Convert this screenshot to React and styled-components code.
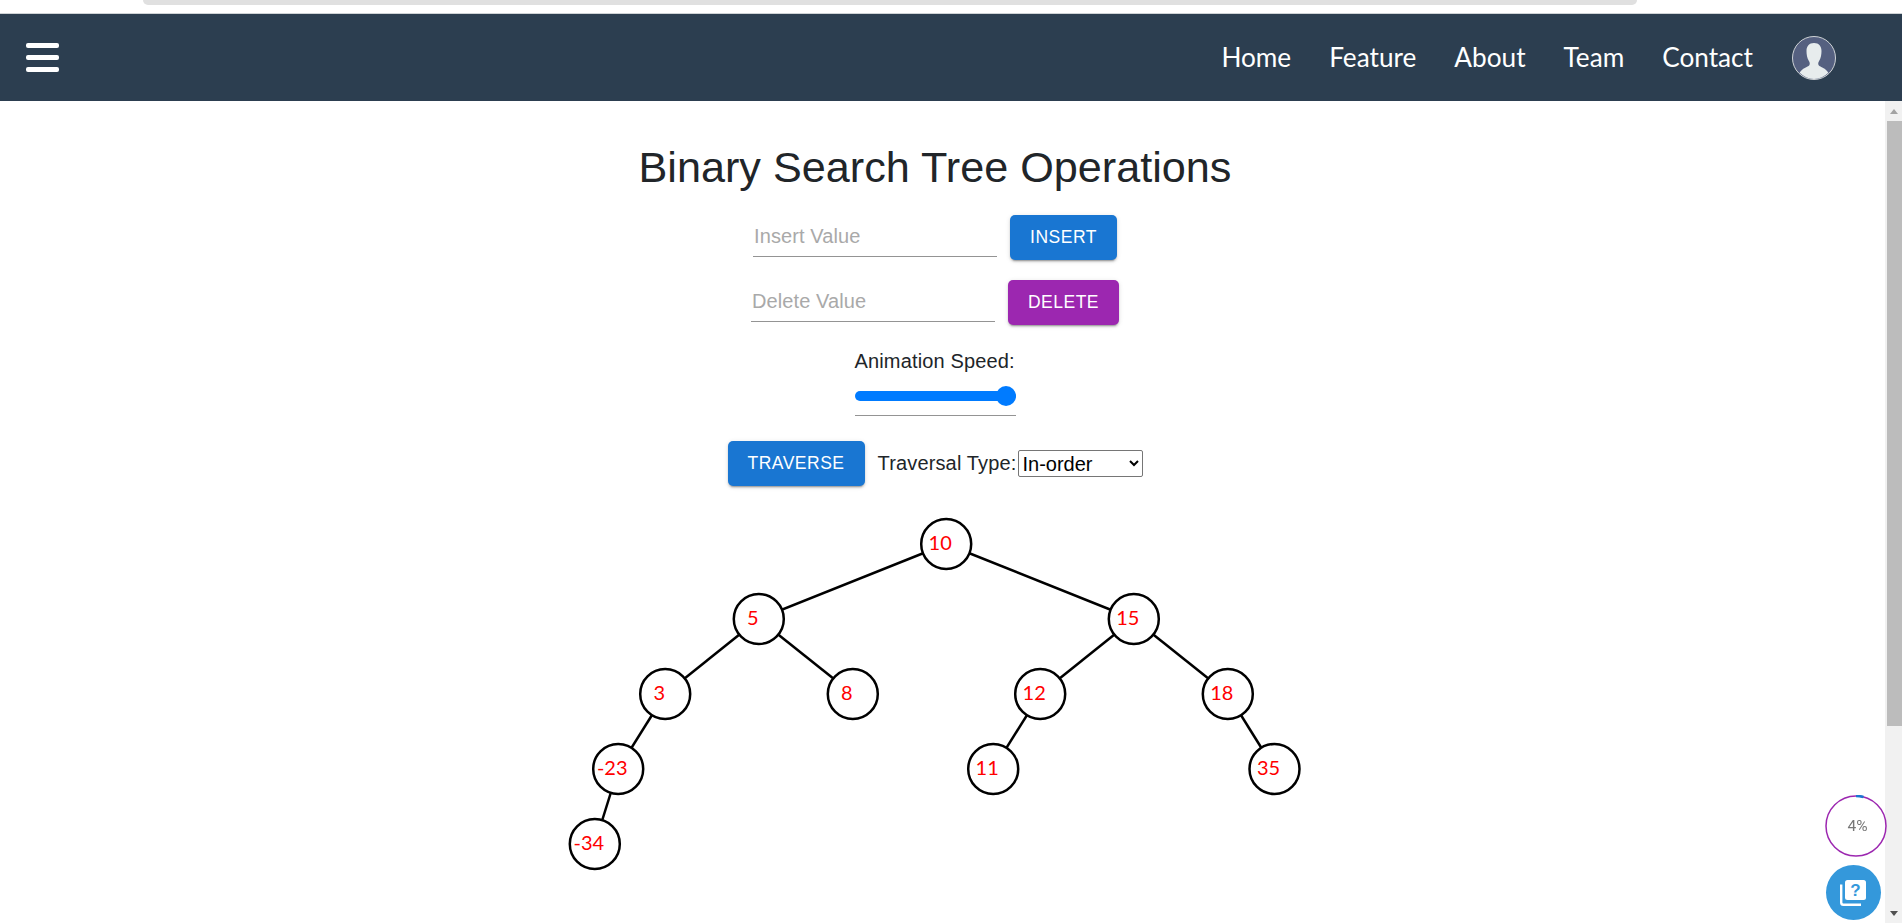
import styled, { createGlobalStyle } from "styled-components";

const GlobalStyle = createGlobalStyle`
  html, body {
    margin: 0;
    padding: 0;
    background: #fff;
    overflow: hidden;
  }
  * {
    box-sizing: border-box;
  }
`;

const Page = styled.div`
  width: 1902px;
  height: 923px;
  overflow: hidden;
  display: flex;
  flex-direction: column;
  font-family: "Liberation Sans", Arial, sans-serif;
  color: #212529;
`;
const TopStrip = styled.div`
  height: 13px;
  padding: 0 265px 0 143px;
`;
const TabEdge = styled.div`
  height: 5px;
  background: #e0e0e0;
  border-radius: 0 0 10px 10px;
`;
const Navbar = styled.nav`
  height: 88px;
  background: #2c3e50;
  border-top: 1px solid #cfd3d6;
  display: flex;
  align-items: center;
  justify-content: space-between;
  padding: 0 66px 0 26px;
`;
const Burger = styled.div`
  width: 33px;
  display: flex;
  flex-direction: column;
  gap: 7px;
`;
const BurgerBar = styled.span`
  display: block;
  height: 5px;
  background: #fff;
  border-radius: 2px;
`;
const NavLinks = styled.div`
  display: flex;
  align-items: center;
  gap: 38px;
`;
const NavLink = styled.a`
  font-family: Lato, sans-serif;
  font-size: 26.2px;
  line-height: 32px;
  margin-top: -2px;
  color: #fff;
`;
const Avatar = styled.svg`
  width: 44px;
  height: 44px;
  margin-left: 1px;
  display: block;
`;
const Body = styled.div`
  flex: 1;
  display: flex;
  min-height: 0;
`;
const Main = styled.main`
  flex: 1;
  display: flex;
  flex-direction: column;
  align-items: center;
  padding: 42px 15px 0 0;
`;
const Title = styled.h1`
  margin: 0 0 24px;
  font-size: 43.2px;
  line-height: 48px;
  font-weight: 400;
  white-space: nowrap;
`;
const FormRow = styled.div`
  display: flex;
  align-items: flex-end;
  gap: 13px;
  margin-bottom: 20px;
`;
const TextInput = styled.input`
  width: 244px;
  height: 38px;
  margin-bottom: 3px;
  padding: 0 1px 2px;
  border: 0;
  border-bottom: 1px solid #949494;
  outline: none;
  font-family: "Liberation Sans", Arial, sans-serif;
  font-size: 20px;
  letter-spacing: 0.1px;
  background: transparent;
  &::placeholder {
    color: #a9a9a9;
    opacity: 1;
  }
`;
const ActionButton = styled.button`
  height: 45px;
  padding: 0 20px;
  border: 0;
  border-radius: 5px;
  background: ${(p) => p.$color};
  color: #fff;
  font-family: "Liberation Sans", Arial, sans-serif;
  font-size: 17.5px;
  letter-spacing: 0.5px;
  text-transform: uppercase;
  box-shadow: 0 3px 1px -2px rgba(0, 0, 0, 0.2), 0 2px 2px 0 rgba(0, 0, 0, 0.14),
    0 1px 5px 0 rgba(0, 0, 0, 0.12);
`;
const SpeedBlock = styled.div`
  width: 161px;
  margin-top: 4px;
  display: flex;
  flex-direction: column;
  border-bottom: 1px solid #949494;
  margin-bottom: 25px;
`;
const SpeedLabel = styled.label`
  font-size: 20px;
  line-height: 24px;
  letter-spacing: 0.15px;
  white-space: nowrap;
`;
const SpeedRange = styled.input`
  -webkit-appearance: none;
  appearance: none;
  width: 100%;
  height: 20px;
  margin: 13px 0 9px;
  background: transparent;
  &::-webkit-slider-runnable-track {
    height: 10px;
    border-radius: 5px;
    background: #007bff;
  }
  &::-webkit-slider-thumb {
    -webkit-appearance: none;
    width: 20px;
    height: 20px;
    margin-top: -5px;
    border-radius: 50%;
    background: #007bff;
  }
`;
const TraverseRow = styled.div`
  display: flex;
  align-items: center;
  gap: 13px;
  margin-bottom: 33px;
`;
const TypeLabel = styled.label`
  display: flex;
  align-items: center;
  gap: 1px;
  font-size: 20px;
  letter-spacing: 0.15px;
  white-space: nowrap;
`;
const TypeSelect = styled.select`
  width: 125px;
  height: 27px;
  font-family: "Liberation Sans", Arial, sans-serif;
  font-size: 20px;
  background: #fff;
  color: #000;
  border: 1px solid #767676;
  border-radius: 2px;
`;
const TreeSvg = styled.svg`
  display: block;
  width: 800px;
  height: 400px;
  flex-shrink: 0;
  overflow: visible;
`;
const Edge = styled.line`
  stroke: #000;
  stroke-width: 2.5;
`;
const NodeCircle = styled.circle`
  fill: #fff;
  stroke: #000;
  stroke-width: 2.5;
`;
const NodeLabel = styled.text`
  fill: #f00;
  font-family: Lato, sans-serif;
  font-size: 20px;
  text-anchor: middle;
`;
const Scrollbar = styled.div`
  width: 17px;
  background: #f1f1f1;
  display: flex;
  flex-direction: column;
  justify-content: space-between;
  align-items: flex-end;
`;
const ScrollArrow = styled.div`
  width: 17px;
  height: 20px;
  display: flex;
  align-items: center;
  justify-content: center;
  &::before {
    content: "";
    border-left: 4.5px solid transparent;
    border-right: 4.5px solid transparent;
    ${(p) => (p.$down ? "border-top: 5px solid #505050;" : "border-bottom: 5px solid #a3a3a3;")}
  }
`;
const ScrollThumb = styled.div`
  width: 15px;
  height: 605px;
  background: #bcbcbc;
`;
const ScrollGroup = styled.div`
  display: flex;
  flex-direction: column;
  align-items: flex-end;
`;
const Widgets = styled.div`
  position: fixed;
  right: 15px;
  bottom: 3px;
  display: flex;
  flex-direction: column;
  align-items: center;
  gap: 8px;
`;
const Progress = styled.div`
  width: 62px;
  height: 62px;
  display: grid;
  place-items: center;
  position: relative;
  font-family: Roboto, sans-serif;
  font-size: 15.5px;
  color: #777;
  svg {
    position: absolute;
    inset: 0;
  }
  span {
    position: relative;
    margin-left: 3px;
  }
`;
const Fab = styled.div`
  width: 55px;
  height: 55px;
  margin-right: 6px;
  border-radius: 50%;
  background: #3498db;
  display: grid;
  place-items: center;
`;

const nodes = [
  { id: 10, x: 411.2, y: 25 },
  { id: 5, x: 223.8, y: 100, parent: 10 },
  { id: 15, x: 598.8, y: 100, parent: 10 },
  { id: 3, x: 130.2, y: 175, parent: 5 },
  { id: 8, x: 317.8, y: 175, parent: 5 },
  { id: 12, x: 505.2, y: 175, parent: 15 },
  { id: 18, x: 692.8, y: 175, parent: 15 },
  { id: -23, x: 83.2, y: 250, parent: 3 },
  { id: 11, x: 458.2, y: 250, parent: 12 },
  { id: 35, x: 739.5, y: 250, parent: 18 },
  { id: -34, x: 59.8, y: 325, parent: -23 },
];

const Tree = () => (
  <TreeSvg viewBox="0 0 800 400">
    {nodes
      .filter((n) => n.parent !== undefined)
      .map((n) => {
        const p = nodes.find((o) => o.id === n.parent);
        return <Edge key={n.id} x1={p.x} y1={p.y} x2={n.x} y2={n.y} />;
      })}
    {nodes.map((n) => (
      <g key={n.id}>
        <NodeCircle cx={n.x} cy={n.y} r="25" />
        <NodeLabel x={n.x - 6} y={n.y + 6}>
          {n.id}
        </NodeLabel>
      </g>
    ))}
  </TreeSvg>
);

const App = () => {
  return (
    <Page>
      <GlobalStyle />
      <TopStrip>
        <TabEdge />
      </TopStrip>
      <Navbar>
        <Burger>
          <BurgerBar />
          <BurgerBar />
          <BurgerBar />
        </Burger>
        <NavLinks>
          <NavLink>Home</NavLink>
          <NavLink>Feature</NavLink>
          <NavLink>About</NavLink>
          <NavLink>Team</NavLink>
          <NavLink>Contact</NavLink>
          <Avatar viewBox="0 0 44 44">
            <circle cx="22" cy="22" r="21.5" fill="#556080" stroke="#cfd3d6" strokeWidth="1" />
            <path
              d="M22 7c-5 0-7.5 3.4-7.5 8 0 3.4.6 7.2 2.4 10 .9 1.4 1.2 3 .4 4.3-1.4 1.8-7.4 3-9.6 7.4A21 21 0 0 0 22 43a21 21 0 0 0 14.3-6.3c-2.2-4.4-8.2-5.6-9.6-7.4-.8-1.3-.5-2.9.4-4.3 1.8-2.8 2.4-6.6 2.4-10 0-4.6-2.5-8-7.5-8z"
              fill="#e7eced"
            />
          </Avatar>
        </NavLinks>
      </Navbar>
      <Body>
        <Main>
          <Title>Binary Search Tree Operations</Title>
          <FormRow>
            <TextInput placeholder="Insert Value" />
            <ActionButton $color="#1976d2">Insert</ActionButton>
          </FormRow>
          <FormRow>
            <TextInput placeholder="Delete Value" />
            <ActionButton $color="#9c27b0">Delete</ActionButton>
          </FormRow>
          <SpeedBlock>
            <SpeedLabel>Animation Speed:</SpeedLabel>
            <SpeedRange type="range" min="0" max="100" defaultValue="100" />
          </SpeedBlock>
          <TraverseRow>
            <ActionButton $color="#1976d2">Traverse</ActionButton>
            <TypeLabel>
              Traversal Type:
              <TypeSelect defaultValue="in">
                <option value="in">In-order</option>
                <option value="pre">Pre-order</option>
                <option value="post">Post-order</option>
              </TypeSelect>
            </TypeLabel>
          </TraverseRow>
          <Tree />
        </Main>
        <Scrollbar>
          <ScrollGroup>
            <ScrollArrow />
            <ScrollThumb />
          </ScrollGroup>
          <ScrollArrow $down />
        </Scrollbar>
      </Body>
      <Widgets>
        <Progress>
          <svg width="62" height="62" viewBox="0 0 62 62">
            <circle cx="31" cy="31" r="30" fill="#fff" stroke="#9c27b0" strokeWidth="1.5" />
            <path d="M31 1a30 30 0 0 1 7.5.95" fill="none" stroke="#1976d2" strokeWidth="2.5" />
          </svg>
          <span>4%</span>
        </Progress>
        <Fab>
          <svg width="26" height="26" viewBox="0 0 26 26">
            <path d="M1.2 4.5v18a2.3 2.3 0 0 0 2.3 2.3h17.5" fill="none" stroke="#fff" strokeWidth="2.4" />
            <rect x="5" y="0" width="21" height="20" rx="2.5" fill="#fff" />
            <text x="15.5" y="16" fontFamily="Liberation Sans, sans-serif" fontSize="17" fontWeight="700" fill="#3498db" textAnchor="middle">
              ?
            </text>
          </svg>
        </Fab>
      </Widgets>
    </Page>
  );
};

export default App;
